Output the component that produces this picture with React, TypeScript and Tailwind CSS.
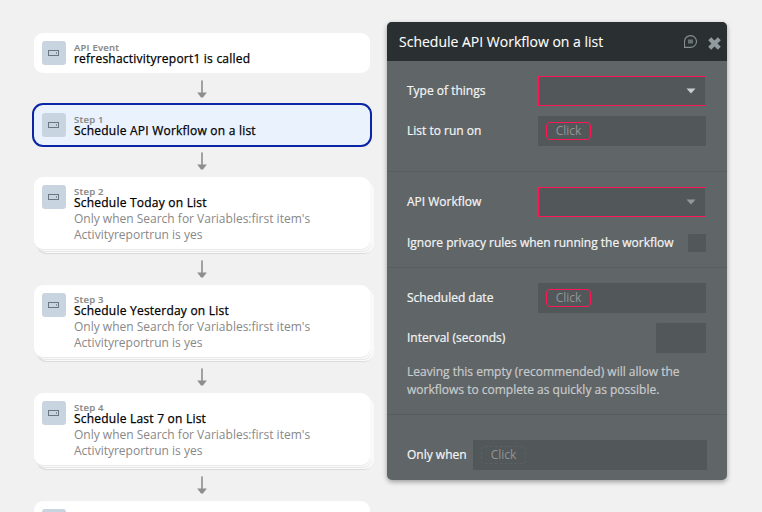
import React from "react";

function StepIcon() {
  return (
    <span className="flex h-6 w-6 shrink-0 items-center justify-center rounded-[3px] bg-[#c8d4df]">
      <svg width="12" height="8" viewBox="0 0 12 8" fill="none">
        <rect x="0.5" y="1.5" width="10" height="5" stroke="#697683" />
        <rect x="8" y="3" width="1" height="2" fill="#8795a2" />
      </svg>
    </span>
  );
}

function Arrow({ tall = false }: { tall?: boolean }) {
  return (
    <div className={"flex shrink-0 justify-center " + (tall ? "h-9 pt-[11px]" : "h-8 pt-[7px]")}>
      <svg width="10" height="18" viewBox="0 0 10 18" fill="#8e8e8e">
        <rect x="4" y="0.4" width="2" height="13" fill="#a2a2a2" />
        <path d="M0.2 12.6H9.8L6 17.6H4Z" />
      </svg>
    </div>
  );
}

type StepProps = { label?: string; title?: string; condition?: string[]; selected?: boolean };

function Step({ label, title, condition, selected }: StepProps) {
  const look = selected
    ? "h-10 bg-[#eaf2fe] outline-2 outline-[#0a25a5]"
    : condition
      ? "h-[72px] bg-white shadow-[0_1px_0_#e9e9e9,2px_2px_0_#fafafa,2px_3px_0_#e6e6e6,4px_4px_0_#fafafa,3px_5px_1px_#dadada]"
      : "h-10 bg-white";
  return (
    <div className={"flex shrink-0 gap-2 rounded-[9px] px-2 pt-2 " + look}>
      <StepIcon />
      {title && (
        <div className="whitespace-nowrap text-[12px] leading-4">
          <div className="h-[10px] pt-px text-[9.5px] font-semibold leading-3 tracking-[0.25px] text-[#888888] [-webkit-text-stroke:0.15px]">{label}</div>
          <div className="tracking-[0.22px] text-black [-webkit-text-stroke:0.25px_black]">{title}</div>
          {condition?.map((line) => (
            <div key={line} className="text-[#888888]">{line}</div>
          ))}
        </div>
      )}
    </div>
  );
}

function Click({ dashed = false }: { dashed?: boolean }) {
  return (
    <span className={"flex h-[18px] w-[45px] items-center justify-center rounded border text-[12px] text-[#929596] [-webkit-text-stroke:0] " + (dashed ? "border-dashed border-[#5b6163]" : "border-[#ff1655]")}>
      Click
    </span>
  );
}

function Select({ muted = false }: { muted?: boolean }) {
  return (
    <div className="flex h-[30px] w-[168px] items-center justify-end border border-[#ff1655] bg-[#525759] pr-[9px]">
      <svg width="10" height="6" viewBox="0 0 10 6" fill={muted ? "#92989b" : "#c9ced0"}>
        <path d="M0.5 0.5H9.5L5 5.5Z" />
      </svg>
    </div>
  );
}

function Field({ label, children }: { label: string; children: React.ReactNode }) {
  return (
    <div className="flex h-[30px] items-center justify-between">
      <span>{label}</span>
      {children}
    </div>
  );
}

const condition = ["Only when Search for Variables:first item's", "Activityreportrun is yes"];

export default function App() {
  return (
    <main className="flex h-[512px] w-[762px] items-start overflow-hidden bg-[#f1f1f1] pl-[34px] font-['Open_Sans',sans-serif]">
      <section className="flex w-[336px] shrink-0 flex-col pt-[33px]">
        <Step label="API Event" title="refreshactivityreport1 is called" />
        <Arrow />
        <Step label="Step 1" title="Schedule API Workflow on a list" selected />
        <Arrow />
        <Step label="Step 2" title="Schedule Today on List" condition={condition} />
        <Arrow tall />
        <Step label="Step 3" title="Schedule Yesterday on List" condition={condition} />
        <Arrow tall />
        <Step label="Step 4" title="Schedule Last 7 on List" condition={condition} />
        <Arrow tall />
        <Step />
      </section>

      <aside className="ml-[17px] mt-[22px] h-[458px] w-[340px] shrink-0 overflow-hidden whitespace-nowrap rounded-[5px] bg-[#606568] text-[12px] text-[#f4f5f5] shadow-[0_2px_5px_rgba(0,0,0,0.35)] [-webkit-text-stroke:0.2px]">
        <header className="flex h-[39px] items-center bg-[#2a3031] pl-3 pr-[6px] text-white">
          <h1 className="flex-1 text-[14px] font-normal [-webkit-text-stroke:0.1px]">Schedule API Workflow on a list</h1>
          <svg className="mr-px" width="13" height="13" viewBox="0 0 13 13" fill="none" stroke="#858f92" strokeWidth="1.1">
            <path d="M0.5 12.4V6.4A6 5.9 0 1 1 6.5 12.4Z" />
            <rect x="4" y="4.5" width="5" height="4" fill="#687275" stroke="none" />
          </svg>
          <svg className="ml-[10px] mt-[3px]" width="13" height="13" viewBox="0 0 13 13" stroke="#919b9f" strokeWidth="4.2">
            <path d="M1.7 1.7L11.3 11.3M11.3 1.7L1.7 11.3" />
          </svg>
        </header>

        <div className="flex h-[111px] flex-col gap-[10px] border-b border-[#575c5f] pl-5 pr-[21px] pt-[15px]">
          <Field label="Type of things"><Select /></Field>
          <Field label="List to run on">
            <div className="flex h-[30px] w-[168px] items-center rounded-[1px] bg-[#525759] pl-2"><Click /></div>
          </Field>
        </div>

        <div className="flex h-24 flex-col border-b border-[#575c5f] pl-5 pr-[21px] pt-[15px]">
          <Field label="API Workflow"><Select muted /></Field>
          <div className="mt-[17px] flex h-[18px] items-center justify-between">
            <span className="-mt-px">Ignore privacy rules when running the workflow</span>
            <span className="h-[18px] w-[18px] rounded-[1px] bg-[#525759]" />
          </div>
        </div>

        <div className="flex h-[147px] flex-col border-b border-[#575c5f] pl-5 pr-[21px] pt-[15px]">
          <Field label="Scheduled date">
            <div className="flex h-[30px] w-[168px] items-center rounded-[1px] bg-[#525759] pl-2"><Click /></div>
          </Field>
          <div className="mt-[10px]">
            <Field label="Interval (seconds)">
              <span className="h-[30px] w-[50px] rounded-[1px] bg-[#525759]" />
            </Field>
          </div>
          <p className="mt-[10px] leading-[18px] text-[#c9cbcc]">
            Leaving this empty (recommended) will allow the<br />workflows to complete as quickly as possible.
          </p>
        </div>

        <div className="flex items-center pl-5 pr-5 pt-[25px]">
          <span className="w-[66px]">Only when</span>
          <div className="flex h-[30px] flex-1 items-center rounded-[1px] bg-[#525759] pl-2"><Click dashed /></div>
        </div>
      </aside>
    </main>
  );
}
